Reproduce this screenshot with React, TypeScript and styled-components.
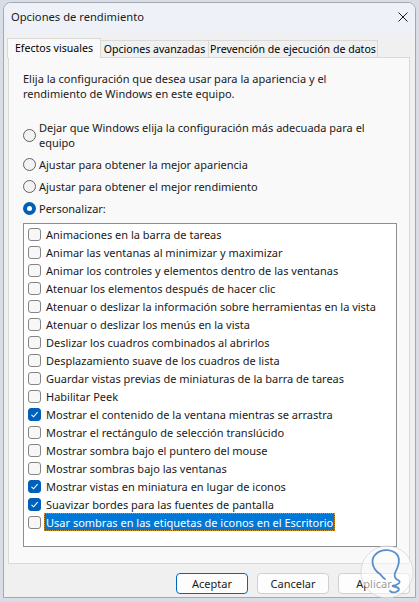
import React from "react";
import styled, { createGlobalStyle } from "styled-components";

const GlobalStyle = createGlobalStyle`
  html, body {
    margin: 0;
    padding: 0;
  }
  body {
    background: #d9dee6;
    font-family: "Noto Sans", "Segoe UI", sans-serif;
  }
`;

const Screen = styled.div`
  position: relative;
  width: 419px;
  height: 602px;
  padding: 2px 3px 0 3px;
  box-sizing: border-box;
  overflow: hidden;
  background: #d9dee6;
`;

const Window = styled.div`
  width: 413px;
  height: 596px;
  box-sizing: border-box;
  border: 1px solid #a3a9b2;
  border-radius: 8px 8px 0 0;
  background: #f0f0f0;
  display: flex;
  flex-direction: column;
  overflow: hidden;
  font-size: 11px;
  line-height: 15px;
  color: #000;
`;

const TitleBar = styled.div`
  height: 31px;
  flex: none;
  box-sizing: border-box;
  display: flex;
  align-items: flex-start;
  justify-content: space-between;
  padding: 6px 7px 0 7px;
  background: #eef2f8;
  font-size: 11.2px;
`;

const Title = styled.span`
  color: #1a1a1a;
`;

const CloseIcon = styled.svg`
  margin-top: 3px;
`;

const TabRow = styled.div`
  position: relative;
  z-index: 1;
  height: 23px;
  flex: none;
  display: flex;
  align-items: flex-end;
  padding-left: 3px;
`;

const Tab = styled.div<{ $active?: boolean; $w: number }>`
  box-sizing: border-box;
  width: ${(p) => p.$w}px;
  height: ${(p) => (p.$active ? 20 : 17)}px;
  margin-bottom: ${(p) => (p.$active ? -1 : 0)}px;
  margin-left: -1px;
  border: 1px solid #d9d9d9;
  border-bottom: none;
  background: ${(p) => (p.$active ? "#f9f9f9" : "#f0f0f0")};
  display: flex;
  justify-content: center;
  padding-top: ${(p) => (p.$active ? 2 : 1)}px;
  white-space: nowrap;
  font-size: 10.6px;
  color: #000;
  &:first-child {
    margin-left: 0;
  }
`;

const Panel = styled.div`
  margin-left: 4px;
  width: 402px;
  height: 507px;
  flex: none;
  box-sizing: border-box;
  border: 1px solid #d9d9d9;
  background: #f9f9f9;
  padding: 13px 0 0 14px;
`;

const Intro = styled.p`
  margin: 0;
  white-space: nowrap;
  color: #1a1a1a;
`;

const RadioGroup = styled.div`
  margin-top: 19px;
  display: flex;
  flex-direction: column;
  gap: 7px;
`;

const RadioRow = styled.div`
  display: flex;
  align-items: center;
`;

const RadioDot = styled.span<{ $on?: boolean }>`
  flex: none;
  box-sizing: border-box;
  width: 13px;
  height: 13px;
  margin-right: 3px;
  border-radius: 50%;
  border: ${(p) => (p.$on ? "none" : "1px solid #616161")};
  background: ${(p) => (p.$on ? "#005fb8" : "#f3f3f3")};
  display: flex;
  align-items: center;
  justify-content: center;
  &::after {
    content: "";
    display: ${(p) => (p.$on ? "block" : "none")};
    width: 5px;
    height: 5px;
    border-radius: 50%;
    background: #fff;
  }
`;

const RadioText = styled.span`
  white-space: nowrap;
  color: #1a1a1a;
`;

const ListBox = styled.div`
  margin-top: 7px;
  width: 374px;
  height: 324px;
  box-sizing: border-box;
  border: 1px solid #8f8f8f;
  background: #fff;
  padding: 1px 0 0 4px;
`;

const Row = styled.div`
  height: 18px;
  display: flex;
  align-items: center;
`;

const Box = styled.span<{ $on?: boolean }>`
  flex: none;
  box-sizing: border-box;
  width: 13px;
  height: 13px;
  border-radius: 3px;
  border: 1px solid ${(p) => (p.$on ? "#005fb8" : "#858585")};
  background: ${(p) => (p.$on ? "#005fb8" : "#f7f7f7")};
  display: flex;
  align-items: center;
  justify-content: center;
`;

const Label = styled.span<{ $sel?: boolean }>`
  margin-left: 3px;
  padding: 0 2px;
  height: 18px;
  box-sizing: border-box;
  display: flex;
  align-items: center;
  white-space: nowrap;
  color: ${(p) => (p.$sel ? "#fff" : "#1a1a1a")};
  background: ${(p) => (p.$sel ? "#0078d7" : "transparent")};
  outline: ${(p) => (p.$sel ? "1px dotted #d98a1c" : "none")};
  outline-offset: -1px;
`;

const ButtonRow = styled.div`
  margin-top: 9px;
  display: flex;
  justify-content: flex-end;
  gap: 9px;
  padding-right: 5px;
`;

const Button = styled.button<{ $primary?: boolean }>`
  width: 72px;
  height: 21px;
  box-sizing: border-box;
  padding: 0;
  border-radius: 4px;
  border: 1px solid ${(p) => (p.$primary ? "#0067c0" : "#d0d0d0")};
  background: #fdfdfd;
  font-family: inherit;
  font-size: 11px;
  line-height: 15px;
  color: #1a1a1a;
`;

const Watermark = styled.svg`
  position: absolute;
  left: 360px;
  top: 543px;
`;

const items: [string, boolean][] = [
  ["Animaciones en la barra de tareas", false],
  ["Animar las ventanas al minimizar y maximizar", false],
  ["Animar los controles y elementos dentro de las ventanas", false],
  ["Atenuar los elementos después de hacer clic", false],
  ["Atenuar o deslizar la información sobre herramientas en la vista", false],
  ["Atenuar o deslizar los menús en la vista", false],
  ["Deslizar los cuadros combinados al abrirlos", false],
  ["Desplazamiento suave de los cuadros de lista", false],
  ["Guardar vistas previas de miniaturas de la barra de tareas", false],
  ["Habilitar Peek", false],
  ["Mostrar el contenido de la ventana mientras se arrastra", true],
  ["Mostrar el rectángulo de selección translúcido", false],
  ["Mostrar sombra bajo el puntero del mouse", false],
  ["Mostrar sombras bajo las ventanas", false],
  ["Mostrar vistas en miniatura en lugar de iconos", true],
  ["Suavizar bordes para las fuentes de pantalla", true],
  ["Usar sombras en las etiquetas de iconos en el Escritorio", false],
];

function Check() {
  return (
    <svg width="9" height="9" viewBox="0 0 9 9">
      <path d="M1.5 4.8 L3.6 6.8 L7.6 2.2" fill="none" stroke="#fff" strokeWidth="1.1" />
    </svg>
  );
}

export default function App() {
  return (
    <>
      <GlobalStyle />
      <Screen>
        <Window>
          <TitleBar>
            <Title>Opciones de rendimiento</Title>
            <CloseIcon width="10" height="10" viewBox="0 0 10 10">
              <path d="M0.5 0.5 L9.5 9.5 M9.5 0.5 L0.5 9.5" stroke="#1a1a1a" strokeWidth="1" />
            </CloseIcon>
          </TitleBar>
          <TabRow>
            <Tab $active $w={94}>Efectos visuales</Tab>
            <Tab $w={109}>Opciones avanzadas</Tab>
            <Tab $w={170}>Prevención de ejecución de datos</Tab>
          </TabRow>
          <Panel>
            <Intro>
              Elija la configuración que desea usar para la apariencia y el
              <br />
              rendimiento de Windows en este equipo.
            </Intro>
            <RadioGroup>
              <RadioRow>
                <RadioDot />
                <RadioText>
                  Dejar que Windows elija la configuración más adecuada para el
                  <br />
                  equipo
                </RadioText>
              </RadioRow>
              <RadioRow>
                <RadioDot />
                <RadioText>Ajustar para obtener la mejor apariencia</RadioText>
              </RadioRow>
              <RadioRow>
                <RadioDot />
                <RadioText>Ajustar para obtener el mejor rendimiento</RadioText>
              </RadioRow>
              <RadioRow>
                <RadioDot $on />
                <RadioText>Personalizar:</RadioText>
              </RadioRow>
            </RadioGroup>
            <ListBox>
              {items.map(([text, on], i) => (
                <Row key={text}>
                  <Box $on={on}>{on && <Check />}</Box>
                  <Label $sel={i === items.length - 1}>{text}</Label>
                </Row>
              ))}
            </ListBox>
          </Panel>
          <ButtonRow>
            <Button $primary>Aceptar</Button>
            <Button>Cancelar</Button>
            <Button>Aplicar</Button>
          </ButtonRow>
        </Window>
        <Watermark width="56" height="58" viewBox="0 0 56 58">
          <circle cx="27" cy="29" r="26" fill="rgba(255,255,255,0.55)" stroke="rgba(205,210,218,0.7)" strokeWidth="1" />
          <path
            d="M20 31 C12 26 10 16 16 11 C22 5 34 6 38 13 C41 19 37 26 35 30 C34 33 35 36 38 37 C42 39 38 42 32 43 C38 44 42 46 36 49 C33 50 31 49 30 48 M20 31 C22 33 23 35 25 36"
            fill="none"
            stroke="#5b8fca"
            strokeWidth="1.8"
            strokeLinecap="round"
          />
        </Watermark>
      </Screen>
    </>
  );
}
